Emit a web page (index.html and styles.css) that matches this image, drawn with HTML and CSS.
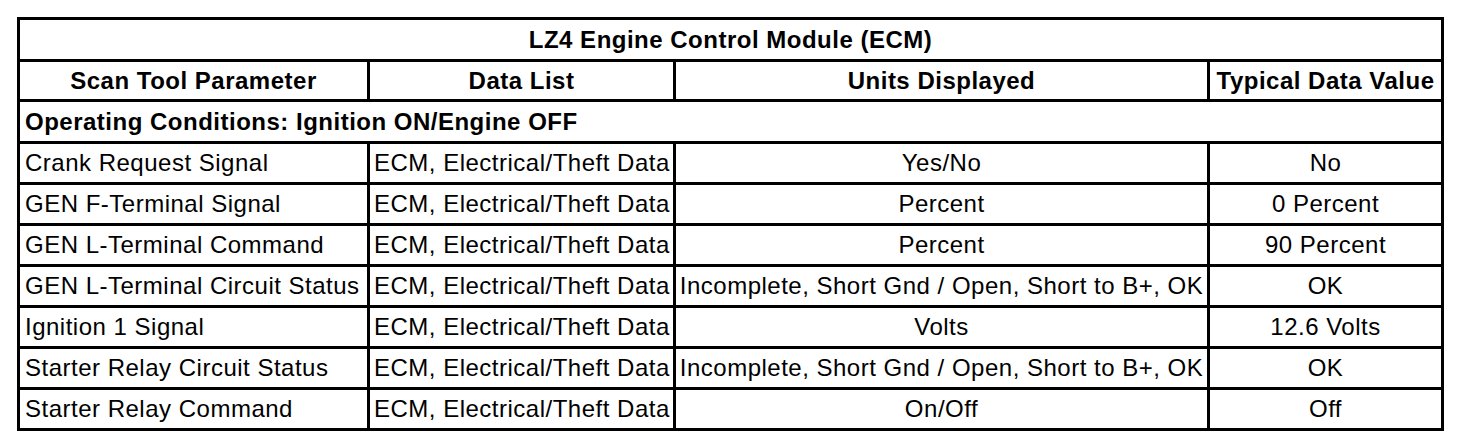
FILE: index.html
```html
<!DOCTYPE html>
<html>
<head>
<meta charset="utf-8">
<link rel="stylesheet" href="styles.css">
</head>
<body>
<table class="ecm">
  <colgroup>
    <col class="c1"><col class="c2"><col class="c3"><col class="c4">
  </colgroup>
  <tr class="title"><th colspan="4">LZ4 Engine Control Module (ECM)</th></tr>
  <tr class="head">
    <th>Scan Tool Parameter</th>
    <th>Data List</th>
    <th>Units Displayed</th>
    <th>Typical Data Value</th>
  </tr>
  <tr class="section"><th colspan="4">Operating Conditions: Ignition ON/Engine OFF</th></tr>
  <tr class="row"><td>Crank Request Signal</td><td>ECM, Electrical/Theft Data</td><td class="ctr">Yes/No</td><td class="ctr">No</td></tr>
  <tr class="row"><td>GEN F-Terminal Signal</td><td>ECM, Electrical/Theft Data</td><td class="ctr">Percent</td><td class="ctr">0 Percent</td></tr>
  <tr class="row"><td>GEN L-Terminal Command</td><td>ECM, Electrical/Theft Data</td><td class="ctr">Percent</td><td class="ctr">90 Percent</td></tr>
  <tr class="row"><td>GEN L-Terminal Circuit Status</td><td>ECM, Electrical/Theft Data</td><td class="ctr">Incomplete, Short Gnd / Open, Short to B+, OK</td><td class="ctr">OK</td></tr>
  <tr class="row"><td>Ignition 1 Signal</td><td>ECM, Electrical/Theft Data</td><td class="ctr">Volts</td><td class="ctr">12.6 Volts</td></tr>
  <tr class="row"><td>Starter Relay Circuit Status</td><td>ECM, Electrical/Theft Data</td><td class="ctr">Incomplete, Short Gnd / Open, Short to B+, OK</td><td class="ctr">OK</td></tr>
  <tr class="row"><td>Starter Relay Command</td><td>ECM, Electrical/Theft Data</td><td class="ctr">On/Off</td><td class="ctr">Off</td></tr>
</table>
</body>
</html>
```

FILE: styles.css
```css
html, body {
  margin: 0;
  padding: 0;
  background: #ffffff;
}
body {
  padding: 17px 0 0 17px;
  font-family: "Liberation Sans", Arial, sans-serif;
  color: #000;
}
.ecm {
  border-collapse: collapse;
  table-layout: fixed;
  width: 1424px;
  border: 3px solid #000;
}
.c1 { width: 350px; }
.c2 { width: 306px; }
.c3 { width: 534px; }
.c4 { width: 234px; }
.ecm th, .ecm td {
  border: 3px solid #000;
  padding: 0 5px;
  font-size: 24px;
  letter-spacing: 0.5px;
  white-space: nowrap;
  overflow: hidden;
  line-height: 26px;
}
.ecm th { font-weight: bold; text-align: center; }
.title th { height: 39px; border-bottom-width: 2px; }
.head th { height: 37px; padding: 0 1px; }
.section th { text-align: left; height: 39px; }
.row td { height: 38px; text-align: left; }
.row td.ctr { text-align: center; padding: 0 2px; }
.row td:nth-child(2) { padding-left: 4px; padding-right: 1px; }
```
